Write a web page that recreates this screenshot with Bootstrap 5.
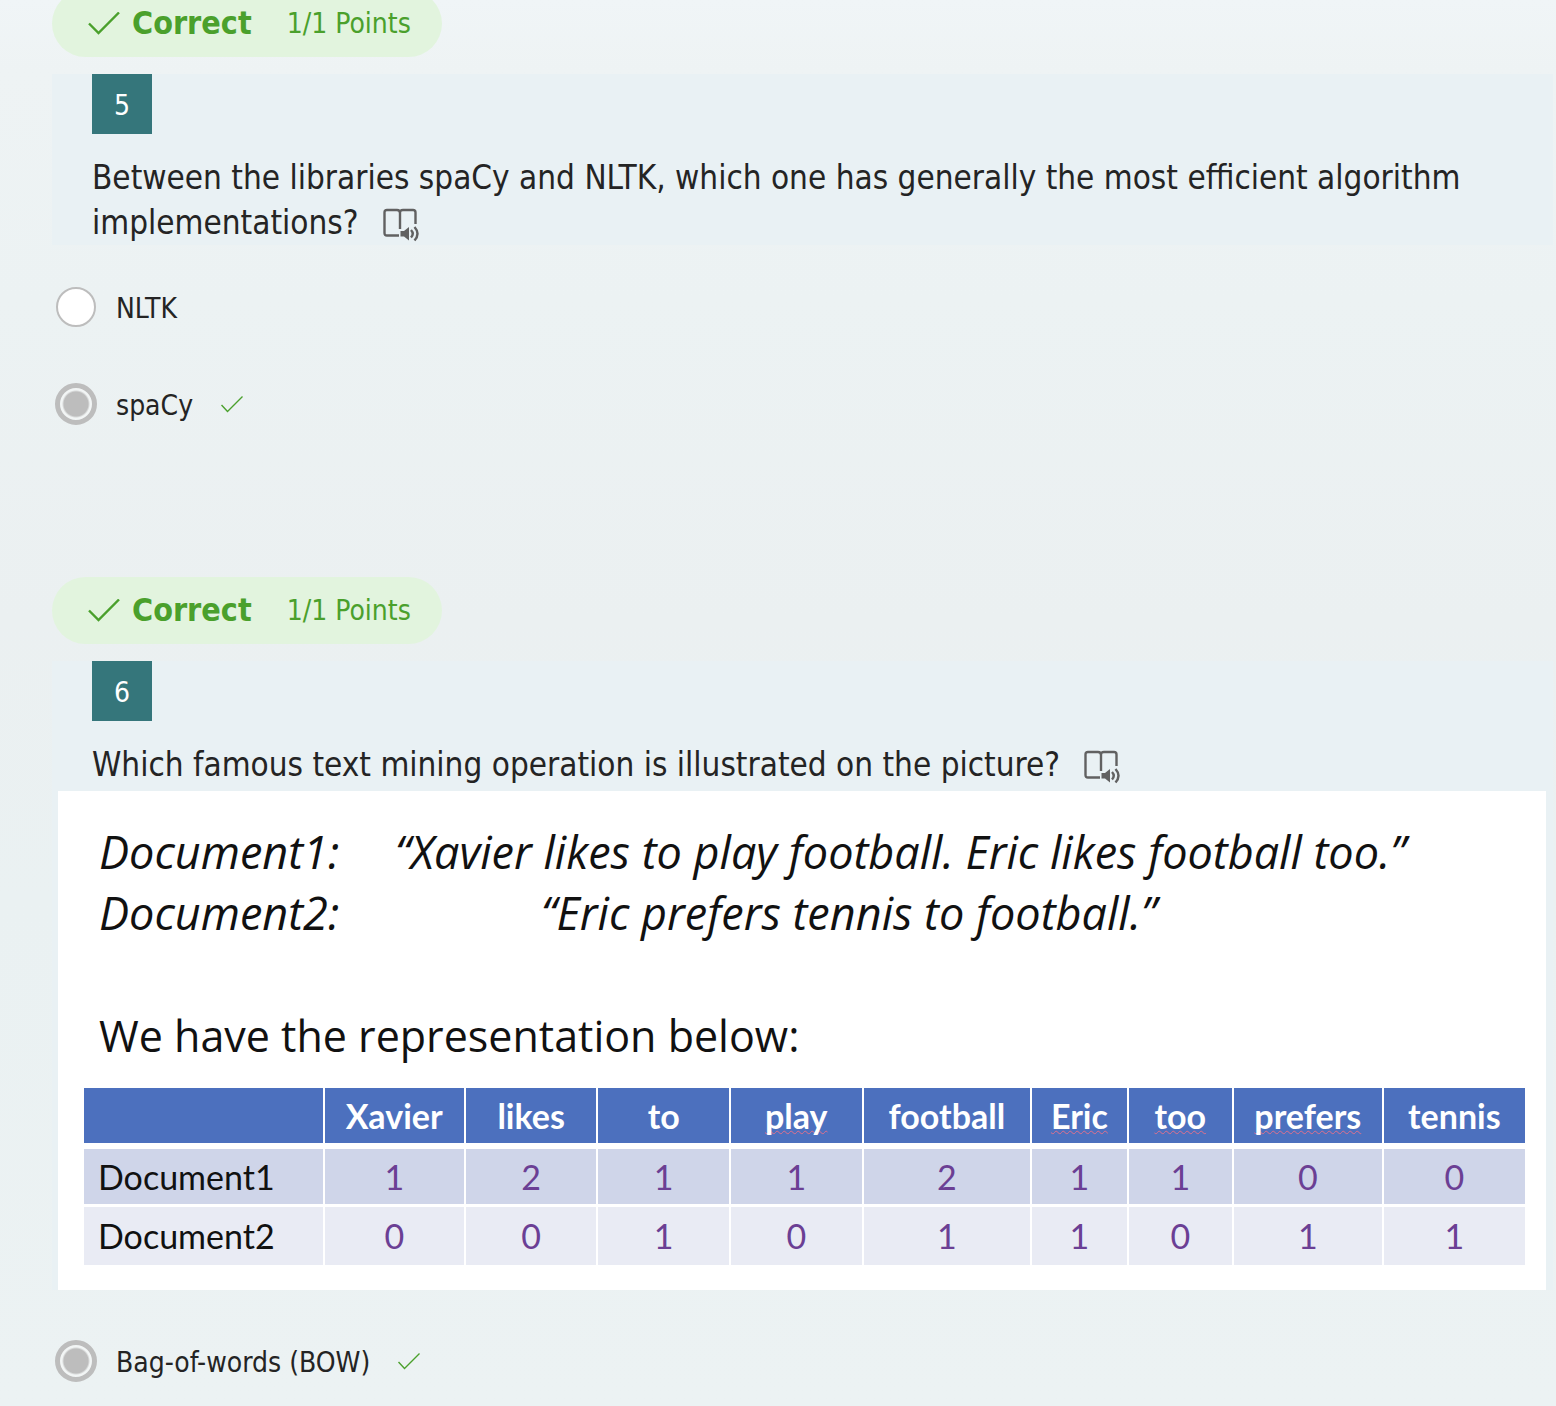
<!DOCTYPE html>
<html lang="en">
<head>
<meta charset="utf-8">
<meta name="viewport" content="width=device-width, initial-scale=1">
<title>Quiz results</title>
<link href="https://cdn.jsdelivr.net/npm/bootstrap@5.3.0/dist/css/bootstrap.min.css" rel="stylesheet">
<style>
  body { font-family: "DejaVu Sans Condensed", "Noto Sans", sans-serif; color: #242424; background: linear-gradient(180deg, #f0f5f7 0, #eef3f4 70px, #ecf2f3 300px, #ebf0f1 620px, #eaf1f2 900px, #ecf2f3 100%); min-height: 100vh; }
  .quiz { padding: 0 0 24px 52px; margin-top: -10px; }
  .result { height: 67px; padding: 0 31px 0 36px; background: #e2f4de; color: #4aa02c; border-radius: 34px; font-size: 28px; margin-bottom: 17px; }
  .result-label { font-size: 32px; margin: 0 35px 0 12px; padding-bottom: 2px; }
  .question { background: #e9f1f4; margin-right: 3px; }
  .question-head { padding: 0 40px; }
  .number { width: 60px; height: 60px; padding-top: 3px; background: #35767b; font-size: 28px; }
  .question-text { font-size: 33px; line-height: 45px; margin: 0; padding-top: 21px; font-weight: 400; }
  .reader { margin-left: 15px; vertical-align: -8px; }
  .choice { height: 42px; font-size: 28px; }
  .choice + .choice { margin-top: 55px; }
  .choices { padding-left: 3px; margin-top: 50px; }
  .choices-first { margin-top: 41px; margin-bottom: 152px; }
  .choice-input { appearance: none; flex: none; width: 40px; height: 40px; margin: 0 1px; border: 2px solid #bdbdbd; border-radius: 50%; background: #fff; }
  .choice-input:checked { width: 42px; height: 42px; margin: 0; border: 5px solid #bdbdbd; background: radial-gradient(circle, #bdbdbd 12px, #f2f5f5 14px); }
  .choice-label { margin-left: 19px; padding-top: 3px; }
  .choice-tick { margin-left: 28px; }
  .slide { margin: 4px 7px 0 6px; padding: 30px 21px 25px 26px; background: #fff; color: #111; font-family: "Open Sans", "Noto Sans", sans-serif; font-size: 45px; line-height: 61px; }
  .slide p { margin: 0 0 0 15px; }
  .doc-name { width: 296px; flex: none; }
  .quote-inset { padding-left: 146px; }
  .slide .intro { margin-top: 62px; margin-bottom: 22px; font-size: 43px; }
  .counts { width: 100%; table-layout: fixed; border-collapse: separate; border-spacing: 0; font-family: Lato, "Noto Sans", sans-serif; font-size: 34px; line-height: 36px; text-align: center; color: #6b3f94; }
  .counts th, .counts td { height: 58px; padding: 0; border-bottom: 3px solid #fff; border-right: 2px solid #fff; }
  .counts thead th { height: 61px; background: #4c70be; color: #fff; border-bottom-width: 6px; }
  .counts tr > :last-child { border-right: 0; }
  .counts tbody th { padding-left: 14px; text-align: left; font-weight: 400; color: #111; }
  .counts tbody tr:first-child > * { background: #cfd5e9; }
  .counts tbody tr:last-child > * { background: #e9ebf4; border-bottom: 0; }
  .typo { text-decoration: underline wavy #e0708c 1px; text-decoration-skip-ink: none; text-underline-offset: 1px; }
</style>
</head>
<body>
<svg class="d-none" xmlns="http://www.w3.org/2000/svg">
  <symbol id="tick" viewBox="0 0 32 24"><path d="M1 11.500 10.500 21 31 .500" fill="none" stroke="currentColor" stroke-width="2.400"/></symbol>
  <symbol id="tick-thin" viewBox="0 0 22 17"><path d="M.500 9 6.500 15.500 21.500 .500" fill="none" stroke="currentColor" stroke-width="1.400"/></symbol>
  <symbol id="reader" viewBox="0 0 36 34">
    <path d="M16 27.500H4Q1.500 27.500 1.500 25V4.500Q1.500 2 4 2H14Q17 2 17 5V21M17 5Q17 2 20 2H30Q32.500 2 32.500 4.500V16" fill="none" stroke="#616161" stroke-width="2.400"/>
    <path d="M17.500 23H21L26 19V32.500L21 28.500H17.500Z" fill="#616161"/>
    <path d="M28 22Q31.500 25.700 28 29.500M31.500 19Q37.500 25.700 31.500 32.500" fill="none" stroke="#616161" stroke-width="2.400"/>
  </symbol>
</svg>
<main class="quiz">
  <section>
    <div class="result d-inline-flex align-items-center">
      <svg width="32" height="24" aria-hidden="true"><use href="#tick"/></svg>
      <strong class="result-label">Correct</strong><span>1/1 Points</span>
    </div>
    <div class="question"><div class="question-head">
      <div class="number d-flex align-items-center justify-content-center text-white">5</div>
      <h2 class="question-text">Between the libraries spaCy and NLTK, which one has generally the most efficient algorithm implementations? <svg class="reader" width="36" height="34" role="img" aria-label="Immersive reader"><use href="#reader"/></svg></h2>
    </div></div>
    <div class="choices choices-first">
      <div class="choice d-flex align-items-center">
        <input class="choice-input" type="radio" name="q5" id="q5a"><label class="choice-label" for="q5a">NLTK</label>
      </div>
      <div class="choice d-flex align-items-center">
        <input class="choice-input" type="radio" name="q5" id="q5b" checked><label class="choice-label" for="q5b">spaCy</label>
        <svg class="choice-tick" width="22" height="17" color="#4aa02c" aria-hidden="true"><use href="#tick-thin"/></svg>
      </div>
    </div>
  </section>
  <section>
    <div class="result d-inline-flex align-items-center">
      <svg width="32" height="24" aria-hidden="true"><use href="#tick"/></svg>
      <strong class="result-label">Correct</strong><span>1/1 Points</span>
    </div>
    <div class="question">
      <div class="question-head">
        <div class="number d-flex align-items-center justify-content-center text-white">6</div>
        <h2 class="question-text">Which famous text mining operation is illustrated on the picture? <svg class="reader" width="36" height="34" role="img" aria-label="Immersive reader"><use href="#reader"/></svg></h2>
      </div>
      <div class="slide">
        <p class="d-flex fst-italic"><span class="doc-name">Document1:</span><span>“Xavier likes to play football. Eric likes football too.”</span></p>
        <p class="d-flex fst-italic"><span class="doc-name">Document2:</span><span class="quote-inset">“Eric prefers tennis to football.”</span></p>
        <p class="intro">We have the representation below:</p>
        <table class="counts">
          <colgroup><col style="width:16.7%"><col style="width:9.8%"><col style="width:9.2%"><col style="width:9.2%"><col style="width:9.2%"><col style="width:11.7%"><col style="width:6.7%"><col style="width:7.3%"><col style="width:10.4%"><col style="width:9.8%"></colgroup>
          <thead><tr><th></th><th>Xavier</th><th>likes</th><th>to</th><th><span class="typo">play</span></th><th>football</th><th><span class="typo">Eric</span></th><th><span class="typo">too</span></th><th><span class="typo">prefers</span></th><th>tennis</th></tr></thead>
          <tbody>
            <tr><th>Document1</th><td>1</td><td>2</td><td>1</td><td>1</td><td>2</td><td>1</td><td>1</td><td>0</td><td>0</td></tr>
            <tr><th>Document2</th><td>0</td><td>0</td><td>1</td><td>0</td><td>1</td><td>1</td><td>0</td><td>1</td><td>1</td></tr>
          </tbody>
        </table>
      </div>
    </div>
    <div class="choices">
      <div class="choice d-flex align-items-center">
        <input class="choice-input" type="radio" name="q6" id="q6a" checked><label class="choice-label" for="q6a">Bag-of-words (BOW)</label>
        <svg class="choice-tick" width="22" height="17" color="#4aa02c" aria-hidden="true"><use href="#tick-thin"/></svg>
      </div>
    </div>
  </section>
</main>
<script src="https://cdn.jsdelivr.net/npm/bootstrap@5.3.0/dist/js/bootstrap.bundle.min.js"></script>
</body>
</html>
